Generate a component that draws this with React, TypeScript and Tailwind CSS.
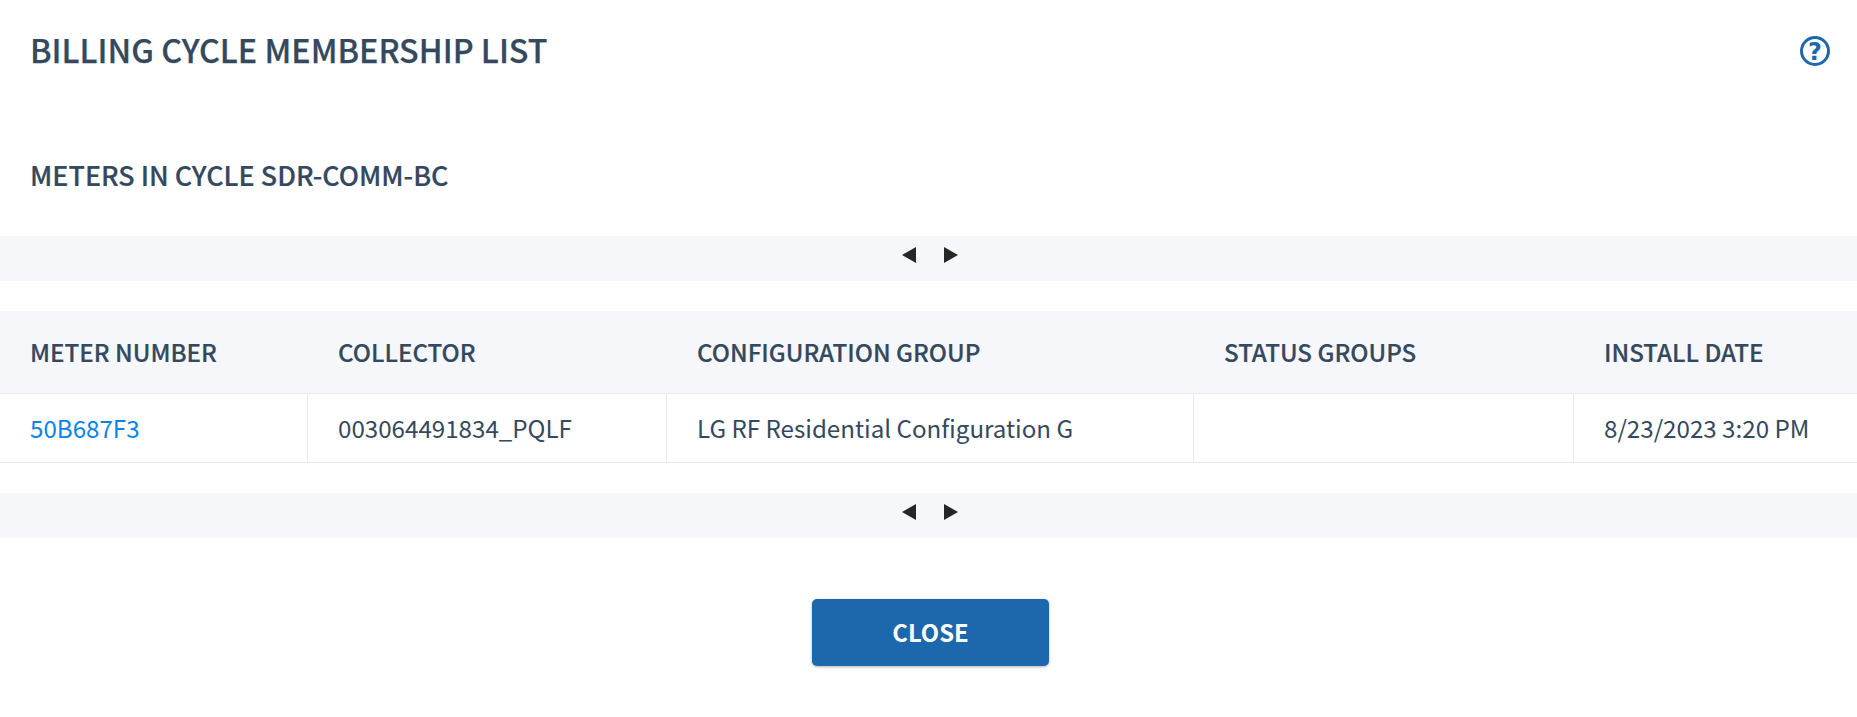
function Pager() {
  return (
    <nav className="flex h-[45px] justify-center gap-[28px] bg-[#f6f7fb] pt-[11px] pl-[3px]">
      <svg width="14" height="16" viewBox="0 0 14 16"><path d="M0 8 14 0v16z" fill="#262626" /></svg>
      <svg width="14" height="16" viewBox="0 0 14 16"><path d="M14 8 0 0v16z" fill="#262626" /></svg>
    </nav>
  );
}

const columns = ["METER NUMBER", "COLLECTOR", "CONFIGURATION GROUP", "STATUS GROUPS", "INSTALL DATE"];
const row = ["50B687F3", "003064491834_PQLF", "LG RF Residential Configuration G", "", "8/23/2023 3:20 PM"];

export default function App() {
  return (
    <div className="h-[717px] overflow-hidden bg-white font-['Noto_Sans_CJK_JP',sans-serif] text-[#34495e]">
      <header className="flex h-[102px] items-center justify-between pr-[27px] pl-[30px]">
        <h1 className="pb-[4px] text-[32.3px] leading-none font-medium whitespace-nowrap [-webkit-text-stroke:0.25px_#34495e]">BILLING CYCLE MEMBERSHIP LIST</h1>
        <svg width="30" height="30" viewBox="0 0 30 30">
          <circle cx="15" cy="15" r="13.5" fill="none" stroke="#1d67ac" strokeWidth="3" />
          <text x="15" y="24" textAnchor="middle" fill="#1d67ac" className="font-['DejaVu_Sans',sans-serif] text-[24px] font-bold">?</text>
        </svg>
      </header>
      <h2 className="flex h-[134px] items-center pt-[13px] pl-[30px] text-[26.9px] leading-none font-medium [-webkit-text-stroke:0.2px_#34495e]">METERS IN CYCLE SDR-COMM-BC</h2>
      <Pager />
      <div className="mt-[30px] grid grid-cols-[308px_359px_527px_380px_1fr]">
        {columns.map((c) => (
          <div key={c} className="flex h-[82px] items-center bg-[#f6f7fb] pt-[1px] pl-[30px] text-[24.15px] leading-none font-medium whitespace-nowrap [-webkit-text-stroke:0.2px_#34495e]">{c}</div>
        ))}
        {row.map((c, i) => (
          <div key={i} className="flex h-[70px] items-center border-y border-r border-[#e9e9eb] pt-[1px] pl-[30px] text-[24.15px] leading-none whitespace-nowrap last:border-r-0">
            {i === 0 ? <a className="text-[#0a84e4]">{c}</a> : c}
          </div>
        ))}
      </div>
      <div className="mt-[30px]"><Pager /></div>
      <div className="flex justify-center pt-[61px] pl-[4px]">
        <button className="h-[67px] w-[237px] rounded-[5px] bg-[#1d67ac] pb-[2px] text-[23.8px] leading-none font-bold text-white shadow-[0_1px_3px_rgba(0,0,0,0.3)]">CLOSE</button>
      </div>
    </div>
  );
}
